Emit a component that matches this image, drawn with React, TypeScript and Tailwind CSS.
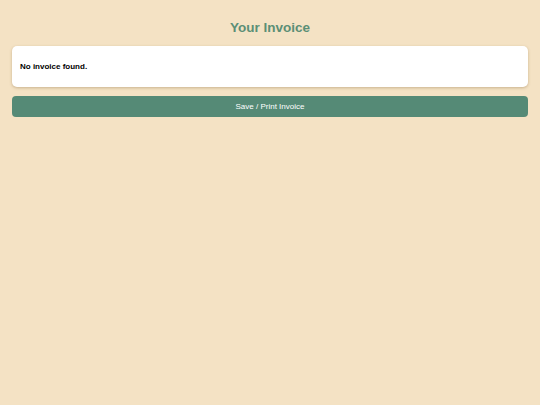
export default function App() {
  return (
    <div className="min-h-[405px] w-full bg-[#f4e2c4] px-3 pt-[19px] font-['Liberation_Sans',Arial,sans-serif]">
      <h1 className="text-center text-[13.5px] font-bold leading-[18px] text-[#5b8f76]">Your Invoice</h1>
      <div className="mt-[9px] flex h-[41px] items-center rounded-[5px] bg-white px-2 shadow-[0_1px_3px_rgba(120,90,40,0.35)]">
        <p className="text-[8px] font-bold text-black">No invoice found.</p>
      </div>
      <button className="mt-[9px] flex h-[21px] w-full items-center justify-center rounded-[4px] bg-[#558a76] text-[8px] text-white">
        Save / Print Invoice
      </button>
    </div>
  );
}
